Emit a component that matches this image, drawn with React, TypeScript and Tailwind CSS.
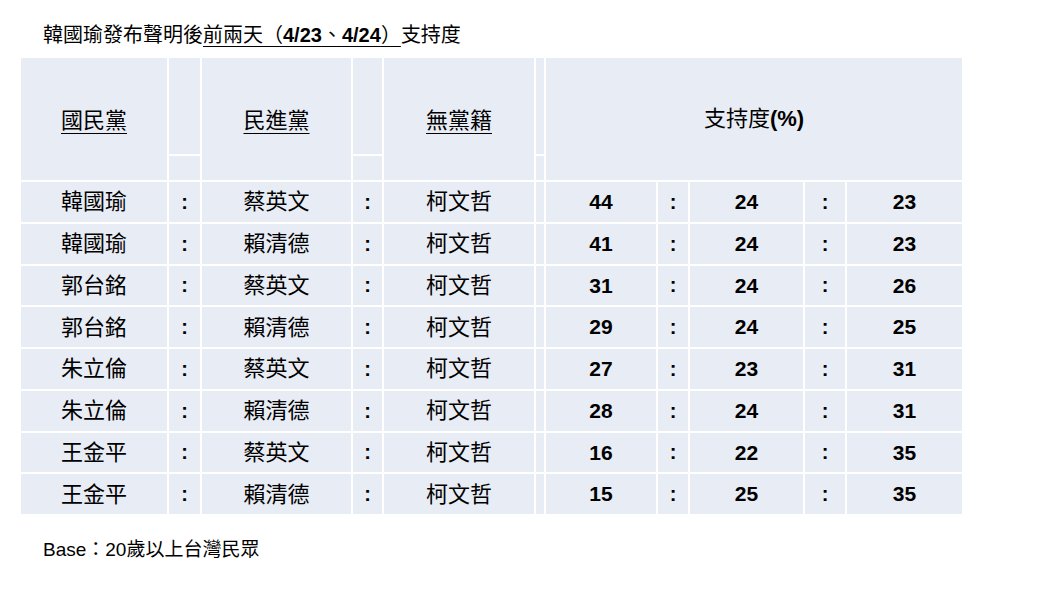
const ROWS: [string, string, string, number, number, number][] = [
  ['韓國瑜', '蔡英文', '柯文哲', 44, 24, 23],
  ['韓國瑜', '賴清德', '柯文哲', 41, 24, 23],
  ['郭台銘', '蔡英文', '柯文哲', 31, 24, 26],
  ['郭台銘', '賴清德', '柯文哲', 29, 24, 25],
  ['朱立倫', '蔡英文', '柯文哲', 27, 23, 31],
  ['朱立倫', '賴清德', '柯文哲', 28, 24, 31],
  ['王金平', '蔡英文', '柯文哲', 16, 22, 35],
  ['王金平', '賴清德', '柯文哲', 15, 25, 35],
];

const COLS = [148, 33, 151, 31, 152, 10, 112, 32, 115, 42, 117];

const cjk = { fontFamily: '"Liberation Serif", "Noto Sans CJK TC", serif' };
const num = { fontFamily: '"Liberation Sans", Arial, sans-serif' };
const ui = { fontFamily: '"Liberation Sans", "Noto Sans CJK TC", sans-serif' };

function Colon() {
  return (
    <td className="border-2 border-white text-center text-[20px] font-bold" style={num}>
      :
    </td>
  );
}

export default function App() {
  return (
    <div className="w-[1060px] h-[596px] bg-white text-black overflow-hidden">
      <div className="h-[56px] pl-[43px] pt-[22px] text-[20px] leading-[26px]" style={ui}>
        韓國瑜發布聲明後
        <span className="underline underline-offset-[4px] decoration-1">
          前兩天（<span className="font-bold">4/23</span>、<span className="font-bold">4/24</span>）
        </span>
        支持度
      </div>

      <table className="ml-[19px] border-collapse table-fixed bg-[#e8ecf4] w-[945px]">
        <colgroup>
          {COLS.map((w, i) => (
            <col key={i} style={{ width: w }} />
          ))}
        </colgroup>
        <thead>
          <tr className="h-[98px]">
            <th rowSpan={2} className="border-2 border-white font-normal text-[22px] pt-[2px]" style={cjk}>
              <span className="underline underline-offset-[5px] decoration-1">國民黨</span>
            </th>
            <th className="border-2 border-white" />
            <th rowSpan={2} className="border-2 border-white font-normal text-[22px] pt-[2px]" style={cjk}>
              <span className="underline underline-offset-[5px] decoration-1">民進黨</span>
            </th>
            <th className="border-2 border-white" />
            <th rowSpan={2} className="border-2 border-white font-normal text-[22px] pt-[2px]" style={cjk}>
              <span className="underline underline-offset-[5px] decoration-1">無黨籍</span>
            </th>
            <th className="border-2 border-white" />
            <th colSpan={5} rowSpan={2} className="border-2 border-white font-normal text-[22px] pb-[2px]" style={ui}>
              支持度<span className="font-bold" style={num}>(%)</span>
            </th>
          </tr>
          <tr className="h-[26px]">
            <th className="border-2 border-white" />
            <th className="border-2 border-white" />
            <th className="border-2 border-white" />
          </tr>
        </thead>
        <tbody>
          {ROWS.map((r, i) => (
            <tr key={i} className="h-[41.75px]">
              <td className="border-2 border-white text-center text-[22px]" style={cjk}>{r[0]}</td>
              <Colon />
              <td className="border-2 border-white text-center text-[22px]" style={cjk}>{r[1]}</td>
              <Colon />
              <td className="border-2 border-white text-center text-[22px]" style={cjk}>{r[2]}</td>
              <td className="border-2 border-white" />
              <td className="border-2 border-white text-center text-[21px] font-bold" style={num}>{r[3]}</td>
              <Colon />
              <td className="border-2 border-white text-center text-[21px] font-bold" style={num}>{r[4]}</td>
              <Colon />
              <td className="border-2 border-white text-center text-[21px] font-bold" style={num}>{r[5]}</td>
            </tr>
          ))}
        </tbody>
      </table>

      <div className="pl-[43px] pt-[22px] text-[19px] leading-[24px]" style={ui}>
        Base：20歲以上台灣民眾
      </div>
    </div>
  );
}
